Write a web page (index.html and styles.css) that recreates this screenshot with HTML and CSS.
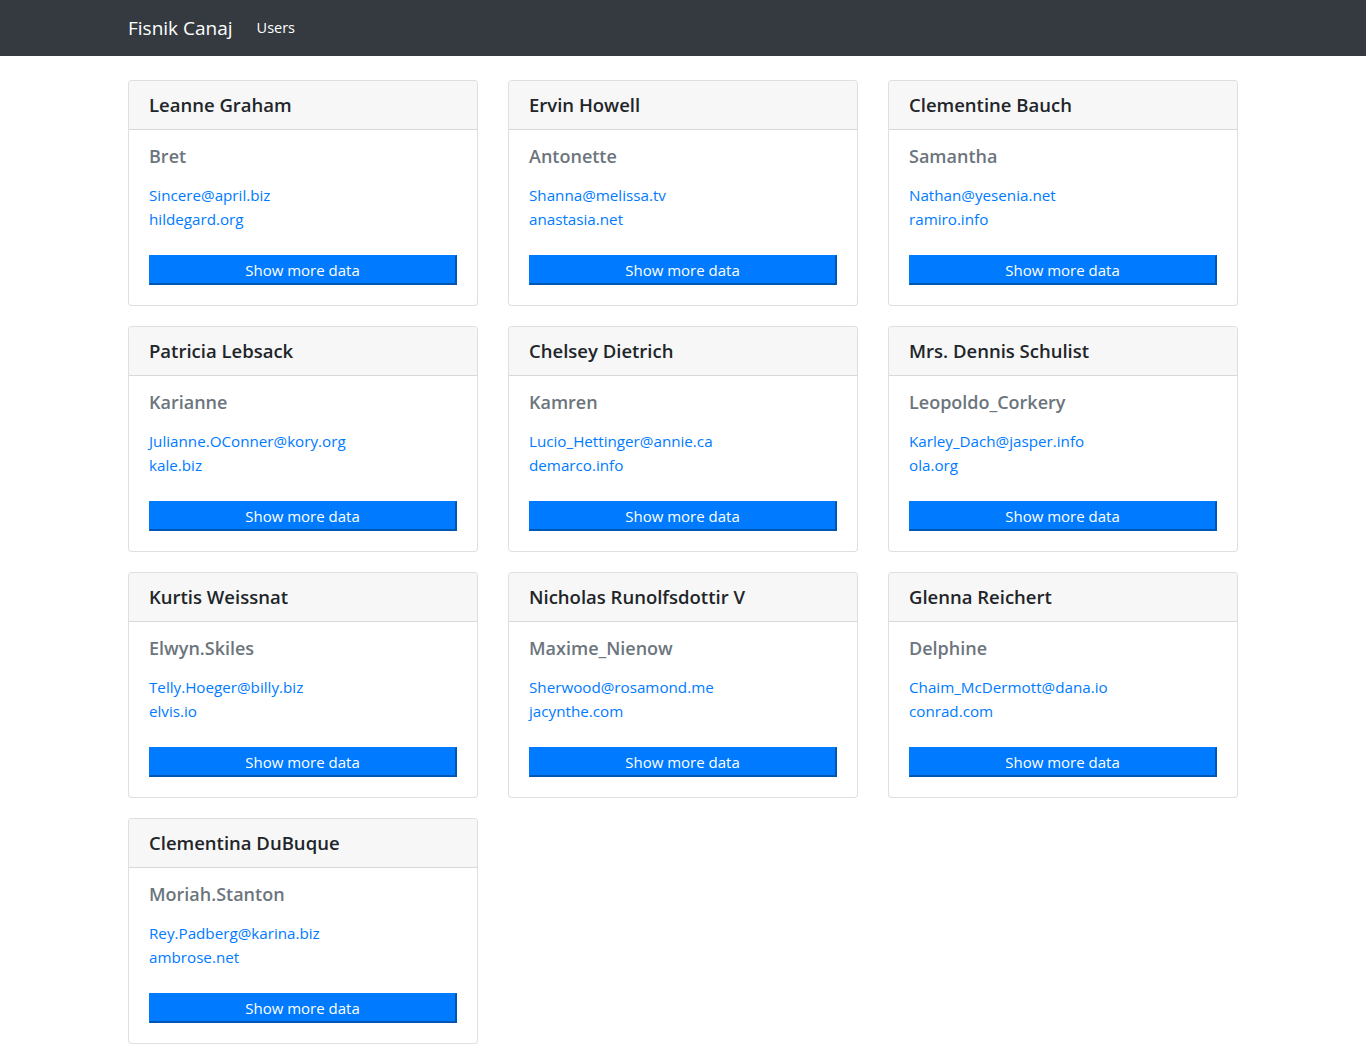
FILE: index.html
```html
<!DOCTYPE html>
<html lang="en">
<head>
<meta charset="utf-8">
<title>Fisnik Canaj</title>
<link rel="stylesheet" href="styles.css">
</head>
<body>
<nav class="navbar">
  <div class="container nav-inner">
    <a class="brand" href="#">Fisnik Canaj</a>
    <a class="nav-link" href="#">Users</a>
  </div>
</nav>
<main class="container">
  <div class="grid">
    <div class="card">
      <div class="card-header"><h5 class="card-title">Leanne Graham</h5></div>
      <div class="card-body">
        <h5 class="card-subtitle">Bret</h5>
        <div class="links"><a href="#">Sincere@april.biz</a><a href="#">hildegard.org</a></div>
        <button class="btn">Show more data</button>
      </div>
    </div>
    <div class="card">
      <div class="card-header"><h5 class="card-title">Ervin Howell</h5></div>
      <div class="card-body">
        <h5 class="card-subtitle">Antonette</h5>
        <div class="links"><a href="#">Shanna@melissa.tv</a><a href="#">anastasia.net</a></div>
        <button class="btn">Show more data</button>
      </div>
    </div>
    <div class="card">
      <div class="card-header"><h5 class="card-title">Clementine Bauch</h5></div>
      <div class="card-body">
        <h5 class="card-subtitle">Samantha</h5>
        <div class="links"><a href="#">Nathan@yesenia.net</a><a href="#">ramiro.info</a></div>
        <button class="btn">Show more data</button>
      </div>
    </div>
    <div class="card">
      <div class="card-header"><h5 class="card-title">Patricia Lebsack</h5></div>
      <div class="card-body">
        <h5 class="card-subtitle">Karianne</h5>
        <div class="links"><a href="#">Julianne.OConner@kory.org</a><a href="#">kale.biz</a></div>
        <button class="btn">Show more data</button>
      </div>
    </div>
    <div class="card">
      <div class="card-header"><h5 class="card-title">Chelsey Dietrich</h5></div>
      <div class="card-body">
        <h5 class="card-subtitle">Kamren</h5>
        <div class="links"><a href="#">Lucio_Hettinger@annie.ca</a><a href="#">demarco.info</a></div>
        <button class="btn">Show more data</button>
      </div>
    </div>
    <div class="card">
      <div class="card-header"><h5 class="card-title">Mrs. Dennis Schulist</h5></div>
      <div class="card-body">
        <h5 class="card-subtitle">Leopoldo_Corkery</h5>
        <div class="links"><a href="#">Karley_Dach@jasper.info</a><a href="#">ola.org</a></div>
        <button class="btn">Show more data</button>
      </div>
    </div>
    <div class="card">
      <div class="card-header"><h5 class="card-title">Kurtis Weissnat</h5></div>
      <div class="card-body">
        <h5 class="card-subtitle">Elwyn.Skiles</h5>
        <div class="links"><a href="#">Telly.Hoeger@billy.biz</a><a href="#">elvis.io</a></div>
        <button class="btn">Show more data</button>
      </div>
    </div>
    <div class="card">
      <div class="card-header"><h5 class="card-title">Nicholas Runolfsdottir V</h5></div>
      <div class="card-body">
        <h5 class="card-subtitle">Maxime_Nienow</h5>
        <div class="links"><a href="#">Sherwood@rosamond.me</a><a href="#">jacynthe.com</a></div>
        <button class="btn">Show more data</button>
      </div>
    </div>
    <div class="card">
      <div class="card-header"><h5 class="card-title">Glenna Reichert</h5></div>
      <div class="card-body">
        <h5 class="card-subtitle">Delphine</h5>
        <div class="links"><a href="#">Chaim_McDermott@dana.io</a><a href="#">conrad.com</a></div>
        <button class="btn">Show more data</button>
      </div>
    </div>
    <div class="card">
      <div class="card-header"><h5 class="card-title">Clementina DuBuque</h5></div>
      <div class="card-body">
        <h5 class="card-subtitle">Moriah.Stanton</h5>
        <div class="links"><a href="#">Rey.Padberg@karina.biz</a><a href="#">ambrose.net</a></div>
        <button class="btn">Show more data</button>
      </div>
    </div>
  </div>
</main>
</body>
</html>
```

FILE: styles.css
```css
* { box-sizing: border-box; }
html, body { margin: 0; padding: 0; }
body {
  font-family: "Open Sans", "Noto Sans", "Liberation Sans", sans-serif;
  font-size: 16px;
  line-height: 24px;
  color: #212529;
  background: #fff;
}
a { text-decoration: none; }

.container {
  width: 1140px;
  margin: 0 auto;
  padding: 0 15px;
}

.navbar {
  background: #343a40;
  height: 56px;
}
.nav-inner {
  display: flex;
  align-items: center;
  height: 56px;
}
.brand {
  color: #fff;
  font-size: 19px;
  line-height: 30px;
  margin-right: 16px;
}
.nav-link {
  color: #fff;
  font-size: 14.5px;
  line-height: 24px;
  padding: 0 8px;
}

main.container { padding-top: 24px; padding-bottom: 20px; }

.grid {
  display: grid;
  grid-template-columns: repeat(3, 350px);
  column-gap: 30px;
  row-gap: 20px;
}

.card {
  border: 1px solid rgba(0, 0, 0, 0.125);
  border-radius: 4px;
  background: #fff;
  overflow: hidden;
}
.card-header {
  background: #f7f7f7;
  border-bottom: 1px solid rgba(0, 0, 0, 0.125);
  padding: 12px 20px;
}
.card-title {
  margin: 0;
  font-size: 18.5px;
  line-height: 24px;
  font-weight: 600;
  color: #212529;
}
.card-body {
  padding: 20px;
  display: flex;
  flex-direction: column;
}
.card-subtitle {
  margin: -6px 0 0;
  font-size: 18px;
  line-height: 24px;
  font-weight: 600;
  color: #6c757d;
}
.links {
  margin-top: 15px;
  display: flex;
  flex-direction: column;
  align-items: flex-start;
}
.links a {
  color: #007bff;
  font-size: 15.2px;
  line-height: 24px;
}
.btn {
  margin-top: 24px;
  height: 30px;
  width: 100%;
  background: #007bff;
  color: #fff;
  font-family: inherit;
  font-size: 15px;
  line-height: 20px;
  padding: 0;
  border-style: solid;
  border-width: 1px 2px 2px 1px;
  border-color: #007bff #0056b3 #0056b3 #007bff;
  border-radius: 0;
}
```
